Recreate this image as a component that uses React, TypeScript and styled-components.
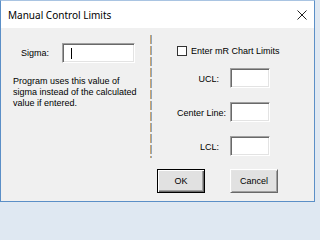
import React from "react";
import styled, { createGlobalStyle } from "styled-components";

const GlobalStyle = createGlobalStyle`
  html, body {
    margin: 0;
    padding: 0;
    background: #dfe8f2;
  }
  body {
    font-family: "Liberation Sans", Arial, sans-serif;
  }
`;

const Window = styled.div`
  width: 313px;
  height: 200px;
  border: 1px solid #5b8fc7;
  border-top-color: #a9c4e2;
  background: #f0f0f0;
  display: flex;
  flex-direction: column;
  overflow: hidden;
`;

const TitleBar = styled.div`
  height: 27px;
  background: #ffffff;
  display: flex;
  align-items: center;
  justify-content: space-between;
  padding: 0 7px 0 7px;
`;

const Title = styled.span`
  font-family: "Noto Sans", "Liberation Sans", sans-serif;
  font-size: 10px;
  color: #000;
  margin-top: 1px;
`;

const CloseIcon = styled.svg`
  width: 10px;
  height: 10px;
  margin-top: 1px;
`;

const Main = styled.div`
  display: grid;
  grid-template-columns: 149px 2px 1fr;
  padding-top: 7px;
  font-size: 9px;
  color: #000;
`;

const LeftPanel = styled.div`
  padding: 8px 0 0 12px;
`;

const SigmaRow = styled.div`
  display: flex;
  align-items: center;
  padding-left: 8px;
`;

const Label = styled.span<{ $width?: number }>`
  width: ${(p) => (p.$width ? `${p.$width}px` : "auto")};
  white-space: nowrap;
`;

const TextBox = styled.div<{ $width: number }>`
  width: ${(p) => p.$width}px;
  height: 20px;
  box-sizing: border-box;
  background: #ffffff;
  border-top: 1px solid #a0a0a0;
  border-left: 1px solid #a0a0a0;
  border-bottom: 1px solid #ffffff;
  border-right: 1px solid #ffffff;
  box-shadow: inset 1px 1px 0 #696969, inset -1px -1px 0 #e3e3e3;
  display: flex;
  align-items: center;
  padding-left: 8px;
`;

const Caret = styled.span`
  width: 1px;
  height: 11px;
  background: #000;
`;

const Note = styled.p`
  margin: 13px 0 0 0;
  line-height: 11px;
`;

const Divider = styled.div`
  width: 2px;
  height: 123px;
  background: linear-gradient(to right, #c9a36f 50%, #8ea6bf 50%);
  -webkit-mask-image: repeating-linear-gradient(to bottom, #000 0 9px, transparent 9px 11px);
  mask-image: repeating-linear-gradient(to bottom, #000 0 9px, transparent 9px 11px);
`;

const RightPanel = styled.div`
  padding: 11px 0 0 25px;
`;

const CheckRow = styled.label`
  display: flex;
  align-items: center;
  gap: 4px;
  height: 10px;
`;

const CheckBox = styled.span`
  width: 10px;
  height: 10px;
  box-sizing: border-box;
  border: 1px solid #333333;
  background: #ffffff;
`;

const FieldGrid = styled.div`
  display: grid;
  grid-template-columns: 42px 40px;
  column-gap: 11px;
  row-gap: 14px;
  align-items: center;
  margin-top: 12px;
`;

const FieldLabel = styled.span`
  text-align: right;
  white-space: nowrap;
  margin-top: 1px;
`;

const ButtonRow = styled.div`
  display: flex;
  gap: 25px;
  padding: 11px 0 0 156px;
`;

const Button = styled.button<{ $default?: boolean }>`
  width: 48px;
  height: 24px;
  box-sizing: border-box;
  padding: 0;
  font-family: "Liberation Sans", Arial, sans-serif;
  font-size: 9px;
  color: #000;
  background: #e1e1e1;
  border: 1px solid;
  border-color: ${(p) =>
    p.$default ? "#000000" : "#ffffff #696969 #696969 #ffffff"};
  box-shadow: ${(p) =>
    p.$default
      ? "inset 1px 1px 0 #ffffff, inset -1px -1px 0 #696969, inset -2px -2px 0 #a0a0a0"
      : "inset 1px 1px 0 #e3e3e3, inset -1px -1px 0 #a0a0a0"};
`;

export default function App() {
  return (
    <>
      <GlobalStyle />
      <Window>
        <TitleBar>
          <Title>Manual Control Limits</Title>
          <CloseIcon viewBox="0 0 10 10">
            <path d="M0.5 0.5 L9.5 9.5 M9.5 0.5 L0.5 9.5" stroke="#222" strokeWidth="1" fill="none" />
          </CloseIcon>
        </TitleBar>
        <Main>
          <LeftPanel>
            <SigmaRow>
              <Label $width={41}>Sigma:</Label>
              <TextBox $width={73}>
                <Caret />
              </TextBox>
            </SigmaRow>
            <Note>
              Program uses this value of
              <br />
              sigma instead of the calculated
              <br />
              value if entered.
            </Note>
          </LeftPanel>
          <Divider />
          <RightPanel>
            <CheckRow>
              <CheckBox />
              <span>Enter mR Chart Limits</span>
            </CheckRow>
            <FieldGrid>
              <FieldLabel>UCL:</FieldLabel>
              <TextBox $width={40} />
              <FieldLabel>Center Line:</FieldLabel>
              <TextBox $width={40} />
              <FieldLabel>LCL:</FieldLabel>
              <TextBox $width={40} />
            </FieldGrid>
          </RightPanel>
        </Main>
        <ButtonRow>
          <Button $default>OK</Button>
          <Button>Cancel</Button>
        </ButtonRow>
      </Window>
    </>
  );
}
